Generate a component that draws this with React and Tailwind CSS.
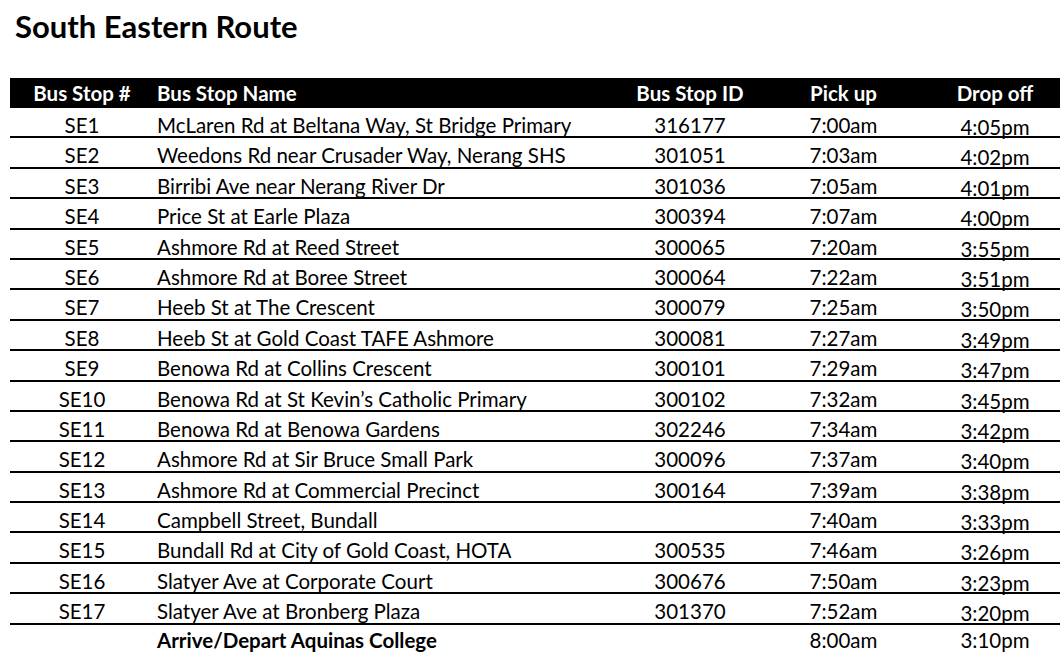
import React from 'react';

const stops = [
  ['SE1', 'McLaren Rd at Beltana Way, St Bridge Primary', '316177', '7:00am', '4:05pm'],
  ['SE2', 'Weedons Rd near Crusader Way, Nerang SHS', '301051', '7:03am', '4:02pm'],
  ['SE3', 'Birribi Ave near Nerang River Dr', '301036', '7:05am', '4:01pm'],
  ['SE4', 'Price St at Earle Plaza', '300394', '7:07am', '4:00pm'],
  ['SE5', 'Ashmore Rd at Reed Street', '300065', '7:20am', '3:55pm'],
  ['SE6', 'Ashmore Rd at Boree Street', '300064', '7:22am', '3:51pm'],
  ['SE7', 'Heeb St at The Crescent', '300079', '7:25am', '3:50pm'],
  ['SE8', 'Heeb St at Gold Coast TAFE Ashmore', '300081', '7:27am', '3:49pm'],
  ['SE9', 'Benowa Rd at Collins Crescent', '300101', '7:29am', '3:47pm'],
  ['SE10', 'Benowa Rd at St Kevin\u2019s Catholic Primary', '300102', '7:32am', '3:45pm'],
  ['SE11', 'Benowa Rd at Benowa Gardens', '302246', '7:34am', '3:42pm'],
  ['SE12', 'Ashmore Rd at Sir Bruce Small Park', '300096', '7:37am', '3:40pm'],
  ['SE13', 'Ashmore Rd at Commercial Precinct', '300164', '7:39am', '3:38pm'],
  ['SE14', 'Campbell Street, Bundall', '', '7:40am', '3:33pm'],
  ['SE15', 'Bundall Rd at City of Gold Coast, HOTA', '300535', '7:46am', '3:26pm'],
  ['SE16', 'Slatyer Ave at Corporate Court', '300676', '7:50am', '3:23pm'],
  ['SE17', 'Slatyer Ave at Bronberg Plaza', '301370', '7:52am', '3:20pm'],
];

const cols = 'grid grid-cols-[144px_469px_134px_173px_130px]';

const App = () => {
  return (
    <div className="w-[1060px] h-[668px] bg-white text-black overflow-hidden" style={{ fontFamily: 'Lato, "Open Sans", sans-serif' }}>
      <h1 className="pl-[15px] pt-[8px] text-[31px] font-bold leading-[36px]">South Eastern Route</h1>

      <div className="ml-[10px] mt-[34px]">
        {/* Header */}
        <div className={`${cols} h-[30px] pb-[2px] bg-black text-white text-[20.5px] font-bold items-center`}>
          <div className="text-center">Bus Stop #</div>
          <div className="pl-[3px]">Bus Stop Name</div>
          <div className="text-center">Bus Stop ID</div>
          <div className="text-center">Pick up</div>
          <div className="text-center">Drop off</div>
        </div>

        {/* Rows */}
        {stops.map(([num, name, id, pick, drop]) => (
          <div key={num} className={`${cols} h-[30.4px] pb-[2px] border-b-2 border-black text-[20.5px] items-center`}>
            <div className="text-center">{num}</div>
            <div className="pl-[3px] whitespace-nowrap">{name}</div>
            <div className="text-center">{id}</div>
            <div className="text-center">{pick}</div>
            <div className="text-center pt-[4px]">{drop}</div>
          </div>
        ))}

        <div className={`${cols} h-[30px] pb-[2px] text-[20.5px] items-center`}>
          <div />
          <div className="pl-[3px] font-bold">Arrive/Depart Aquinas College</div>
          <div />
          <div className="text-center">8:00am</div>
          <div className="text-center">3:10pm</div>
        </div>
      </div>
    </div>
  );
};

export default App;
